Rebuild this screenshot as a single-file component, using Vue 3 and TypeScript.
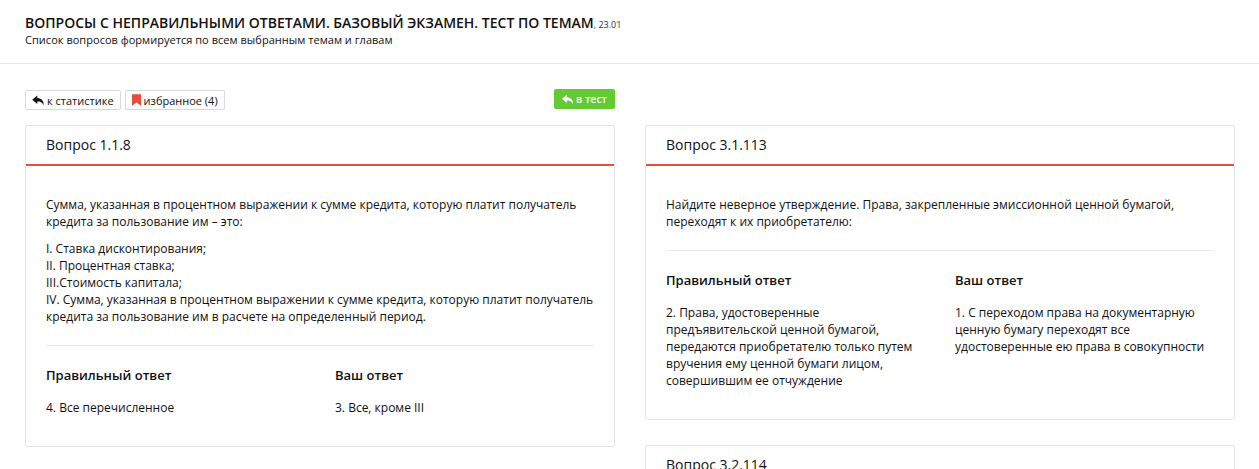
<template>
  <div class="page">
    <header class="page-header">
      <h1 class="page-title">Вопросы с неправильными ответами. Базовый экзамен. Тест по темам<small>, 23.01</small></h1>
      <p class="page-desc">Список вопросов формируется по всем выбранным темам и главам</p>
    </header>

    <div class="content">
      <div class="toolbar">
        <div class="toolbar__left">
          <button class="btn">
            <svg class="icon" viewBox="0 0 16 14"><path :d="replyPath" /></svg>к статистике
          </button>
          <button class="btn">
            <svg class="icon icon--mark" viewBox="0 0 10 13"><path d="M0 0h10v13L5 9.2 0 13z" /></svg>избранное (4)
          </button>
        </div>
        <button class="btn btn--green">
          <svg class="icon" viewBox="0 0 16 14"><path :d="replyPath" /></svg>в тест
        </button>
      </div>
      <div></div>

      <div v-for="(col, i) in columns" :key="i" class="column">
        <section v-for="q in col" :key="q.id" class="card">
          <div class="card__header">Вопрос {{ q.id }}</div>
          <div v-if="q.text.length" class="card__body">
            <p v-for="(t, j) in q.text" :key="j" class="card__text" v-html="t"></p>
            <div class="answers">
              <div>
                <h4 class="answers__title">Правильный ответ</h4>
                <p class="answers__text">{{ q.right }}</p>
              </div>
              <div>
                <h4 class="answers__title">Ваш ответ</h4>
                <p class="answers__text">{{ q.yours }}</p>
              </div>
            </div>
          </div>
        </section>
      </div>
    </div>
  </div>
</template>

<script setup lang="ts">
interface Question {
  id: string
  text: string[]
  right?: string
  yours?: string
}

const replyPath = 'M6.5 0.5 0 6l6.5 5.5V8.2c3.6 0 6.2.6 8 5 .6-5.300-2.500-9-8-9.300z'

const columns: Question[][] = [
  [
    {
      id: '1.1.8',
      text: [
        'Сумма, указанная в процентном выражении к сумме кредита, которую платит получатель кредита за пользование им – это:',
        'I. Ставка дисконтирования;<br>II. Процентная ставка;<br>III.Стоимость капитала;<br>IV. Сумма, указанная в процентном выражении к сумме кредита, которую платит получатель кредита за пользование им в расчете на определенный период.',
      ],
      right: '4. Все перечисленное',
      yours: '3. Все, кроме III',
    },
  ],
  [
    {
      id: '3.1.113',
      text: [
        'Найдите неверное утверждение. Права, закрепленные эмиссионной ценной бумагой, переходят к их приобретателю:',
      ],
      right: '2. Права, удостоверенные предъявительской ценной бумагой, передаются приобретателю только путем вручения ему ценной бумаги лицом, совершившим ее отчуждение',
      yours: '1. С переходом права на документарную ценную бумагу переходят все удостоверенные ею права в совокупности',
    },
    { id: '3.2.114', text: [] },
  ],
]
</script>

<style scoped>
.page { font-family: "Open Sans", "Noto Sans", sans-serif; color: #111; height: 469px; overflow: hidden; background: #fff; }
.page * { box-sizing: border-box; }
.page-header { height: 64px; padding: 15px 25px 0; border-bottom: 1px solid #e4e6e8; }
.page-title { margin: 0; font-size: 14px; line-height: 16px; font-weight: 600; text-transform: uppercase; color: #111; }
.page-title small { font-size: 9px; font-weight: 400; color: #333; }
.page-desc { margin: -2px 0 0; font-size: 11px; line-height: 17px; letter-spacing: 0.03px; color: #111; }
.content { display: grid; grid-template-columns: 590px 590px; column-gap: 30px; align-items: start; padding: 25px 25px 0; }
.toolbar { display: flex; justify-content: space-between; align-items: flex-start; height: 21px; margin-bottom: 15px; }
.toolbar__left { display: flex; gap: 4px; margin-top: 1px; }
.btn { display: inline-flex; align-items: center; height: 20px; padding: 0 6px; border: 1px solid #d5dbdd; border-radius: 2px; background: #fff; font-family: inherit; font-size: 11px; color: #111; }
.btn--green { padding: 0 7px; background: #62cb31; border-color: #62cb31; color: #fff; font-size: 10.5px; font-weight: 600; }
.icon { width: 13px; height: 11px; margin-right: 2px; fill: #111; }
.icon--mark { width: 9px; height: 12px; margin-right: 3px; fill: #e74c3c; }
.btn--green .icon { width: 12px; fill: #fff; }
.column { display: flex; flex-direction: column; gap: 25px; }
.card { border: 1px solid #e4e5e7; border-radius: 2px; background: #fff; }
.card__header { height: 40px; padding: 9px 20px 0; border-bottom: 2px solid #e74c3c; font-size: 14px; line-height: 19px; color: #111; }
.card__body { padding: 30px 20px 30px; }
.card__text { margin: 0 0 8px; font-size: 12px; line-height: 17px; color: #111; }
.card__text + .card__text { margin-top: 10px; }
.answers { display: grid; grid-template-columns: 1fr 1fr; margin-top: 20px; padding-top: 19px; border-top: 1px solid #eaeaea; column-gap: 30px; }
.answers__title { margin: 0 0 14px; font-size: 13px; line-height: 20px; font-weight: 600; color: #111; }
.answers__text { margin: 0; font-size: 12px; line-height: 17px; color: #111; }
</style>

<style>
html, body { overflow: hidden; background: #fff; }
</style>
